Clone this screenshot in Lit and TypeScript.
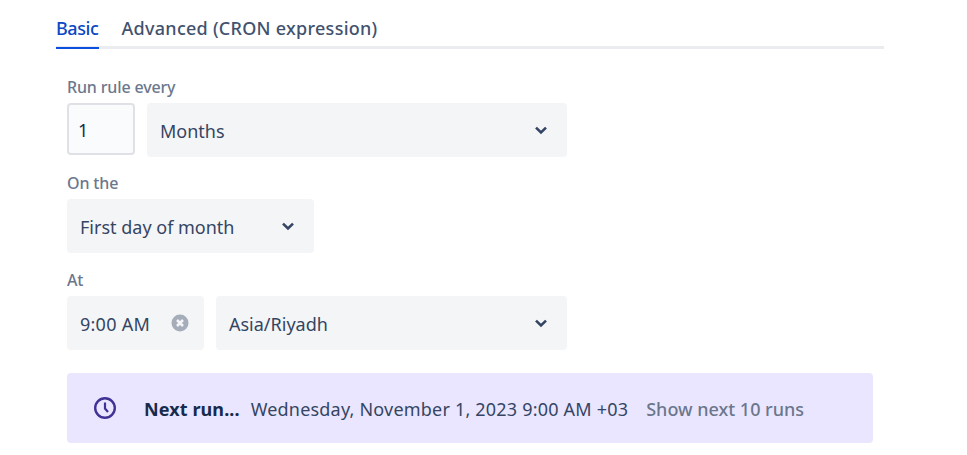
import { LitElement, html, css } from "lit";
import { customElement } from "lit/decorators.js";

const chevron = html`<svg class="chev" viewBox="0 0 14 10" width="14" height="10"><path d="M2 2.6 7 7.4 12 2.6" fill="none" stroke="#344563" stroke-width="2.6"/></svg>`;

@customElement("app-root")
export class AppRoot extends LitElement {
  static styles = css`
    :host { display: block; width: 967px; height: 455px; overflow: hidden; background: #fff;
      font-family: "Noto Sans", "Open Sans", sans-serif; color: #344563; font-size: 18px; }
    .page { padding: 14px 83px 0 56px; }
    .tabs { display: flex; gap: 23px; border-bottom: 3px solid #ebecf0; height: 32px; box-sizing: content-box; }
    .tab { font-size: 18px; line-height: 29px; height: 32px; font-weight: 500; color: #42526e; box-sizing: border-box; letter-spacing: 0.27px; }
    .tab.active { color: #0b47c4; border-bottom: 2px solid #0b4fe0; height: 35px; letter-spacing: -0.4px; }
    .form { padding: 0 11px; display: flex; flex-direction: column; }
    .label { font-size: 16px; line-height: 22px; color: #6b778c; font-weight: 500; letter-spacing: -0.15px; }
    .l1 { margin-top: 27px; }
    .l2 { margin-top: 15px; }
    .l3 { margin-top: 16px; }
    .row { display: flex; gap: 12px; margin-top: 5px; align-items: flex-start; }
    .input { width: 68px; height: 52px; box-sizing: border-box; border: 2px solid #dfe1e6; border-radius: 4px;
      background: #fafbfc; padding: 2px 0 0 9px; display: flex; align-items: center; color: #172b4d; }
    .select { height: 54px; box-sizing: border-box; background: #f4f5f7; border-radius: 4px; padding: 0 19px 0 13px;
      display: flex; align-items: center; justify-content: space-between; }
    .select span { padding-top: 2px; }
    .months { width: 420px; }
    .first { width: 247px; }
    .time { width: 137px; padding-right: 15px; letter-spacing: 0.25px; }
    .zone { width: 351px; }
    .chev { display: block; }
    .banner { margin-top: 23px; height: 70px; box-sizing: border-box; background: #eae6ff; border-radius: 4px;
      display: flex; align-items: center; padding-left: 26px; }
    .banner span { padding-top: 2px; }
    .clock { display: block; margin-right: 27px; }
    .next { font-weight: 700; color: #172b4d; margin-right: 11px; letter-spacing: 0.1px; }
    .date { margin-right: 18px; letter-spacing: 0.2px; }
    .link { color: #6b778c; font-weight: 500; }
  `;

  render() {
    return html`
      <div class="page">
        <div class="tabs">
          <div class="tab active">Basic</div>
          <div class="tab">Advanced (CRON expression)</div>
        </div>
        <div class="form">
          <div class="label l1">Run rule every</div>
          <div class="row">
            <div class="input">1</div>
            <div class="select months"><span>Months</span>${chevron}</div>
          </div>
          <div class="label l2">On the</div>
          <div class="row">
            <div class="select first"><span>First day of month</span>${chevron}</div>
          </div>
          <div class="label l3">At</div>
          <div class="row">
            <div class="select time">
              <span>9:00 AM</span>
              <svg viewBox="0 0 18 18" width="18" height="18">
                <circle cx="9" cy="9" r="8.5" fill="#a5adba"/>
                <path d="M6 6 12 12M12 6 6 12" stroke="#f4f5f7" stroke-width="2.6"/>
              </svg>
            </div>
            <div class="select zone"><span>Asia/Riyadh</span>${chevron}</div>
          </div>
          <div class="banner">
            <svg class="clock" viewBox="0 0 24 24" width="24" height="24">
              <circle cx="12" cy="12" r="9.8" fill="none" stroke="#403294" stroke-width="2.4"/>
              <path d="M12 6.5V12.5L15 16" fill="none" stroke="#403294" stroke-width="2.2"/>
            </svg>
            <span class="next">Next run...</span>
            <span class="date">Wednesday, November 1, 2023 9:00 AM +03</span>
            <span class="link">Show next 10 runs</span>
          </div>
        </div>
      </div>
    `;
  }
}
